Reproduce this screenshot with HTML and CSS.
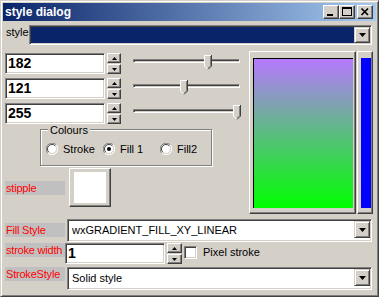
FILE: index.html
```html
<!DOCTYPE html>
<html lang="en">
<head>
    <meta charset="UTF-8">
    <title>style dialog</title>
    <link rel="stylesheet" href="styles.css">
</head>
<body>
    <div class="window">
        <div class="titlebar">
            <span class="title">style dialog</span>
            <div class="caption-buttons">
                <span class="cap-btn"><svg width="14" height="12" viewBox="0 0 14 12"><rect x="3" y="8" width="6" height="2" fill="#000"/></svg></span>
                <span class="cap-btn"><svg width="14" height="12" viewBox="0 0 14 12"><rect x="2.5" y="1.5" width="9" height="8" fill="none" stroke="#000"/><rect x="2" y="1" width="10" height="2" fill="#000"/></svg></span>
                <span class="cap-btn close"><svg width="14" height="12" viewBox="0 0 14 12"><path d="M3.5 2.5L10 9M10 2.5L3.5 9" stroke="#000" stroke-width="1.7"/></svg></span>
            </div>
        </div>

        <div class="panel">
            <div class="style-row">
                <span class="style-label">style</span>
                <div class="combo combo-top">
                    <span class="combo-text selected"></span>
                    <span class="drop-btn"><svg width="7" height="4" viewBox="0 0 7 4"><path d="M0 0H7L3.5 4Z" fill="#000"/></svg></span>
                </div>
            </div>

            <div class="middle">
                <div class="left-col">
                    <div class="color-row">
                        <div class="num-box">182</div>
                        <div class="spin">
                            <span class="spin-btn"><svg width="5" height="3" viewBox="0 0 5 3"><path d="M0 3H5L2.5 0Z" fill="#000"/></svg></span>
                            <span class="spin-btn"><svg width="5" height="3" viewBox="0 0 5 3"><path d="M0 0H5L2.5 3Z" fill="#000"/></svg></span>
                        </div>
                        <div class="slider">
                            <div class="slider-track"></div>
                            <svg class="thumb" style="left: 71px" width="8" height="15" viewBox="0 0 8 15"><path d="M0 0H8V11L4 15L0 11Z" fill="#d4d0c8"/><path d="M0.5 11V0.5H7" stroke="#fff" fill="none"/><path d="M0.5 11L4 14.5" stroke="#fff" fill="none"/><path d="M7.5 0V11L4 14.5" stroke="#404040" fill="none"/><path d="M6.5 1V10.6L4 13.2" stroke="#808080" fill="none"/></svg>
                        </div>
                    </div>
                    <div class="color-row">
                        <div class="num-box">121</div>
                        <div class="spin">
                            <span class="spin-btn"><svg width="5" height="3" viewBox="0 0 5 3"><path d="M0 3H5L2.5 0Z" fill="#000"/></svg></span>
                            <span class="spin-btn"><svg width="5" height="3" viewBox="0 0 5 3"><path d="M0 0H5L2.5 3Z" fill="#000"/></svg></span>
                        </div>
                        <div class="slider">
                            <div class="slider-track"></div>
                            <svg class="thumb" style="left: 47px" width="8" height="15" viewBox="0 0 8 15"><path d="M0 0H8V11L4 15L0 11Z" fill="#d4d0c8"/><path d="M0.5 11V0.5H7" stroke="#fff" fill="none"/><path d="M0.5 11L4 14.5" stroke="#fff" fill="none"/><path d="M7.5 0V11L4 14.5" stroke="#404040" fill="none"/><path d="M6.5 1V10.6L4 13.2" stroke="#808080" fill="none"/></svg>
                        </div>
                    </div>
                    <div class="color-row">
                        <div class="num-box">255</div>
                        <div class="spin">
                            <span class="spin-btn"><svg width="5" height="3" viewBox="0 0 5 3"><path d="M0 3H5L2.5 0Z" fill="#000"/></svg></span>
                            <span class="spin-btn"><svg width="5" height="3" viewBox="0 0 5 3"><path d="M0 0H5L2.5 3Z" fill="#000"/></svg></span>
                        </div>
                        <div class="slider">
                            <div class="slider-track"></div>
                            <svg class="thumb" style="left: 100px" width="8" height="15" viewBox="0 0 8 15"><path d="M0 0H8V11L4 15L0 11Z" fill="#d4d0c8"/><path d="M0.5 11V0.5H7" stroke="#fff" fill="none"/><path d="M0.5 11L4 14.5" stroke="#fff" fill="none"/><path d="M7.5 0V11L4 14.5" stroke="#404040" fill="none"/><path d="M6.5 1V10.6L4 13.2" stroke="#808080" fill="none"/></svg>
                        </div>
                    </div>

                    <div class="group">
                        <span class="group-title">Colours</span>
                        <div class="options">
                            <label class="option">
                                <svg width="12" height="12" viewBox="0 0 12 12"><circle cx="6" cy="6" r="5" fill="#fff"/><path d="M1.76 10.24A6 6 0 0 1 10.24 1.76" stroke="#808080" fill="none"/><path d="M10.24 1.76A6 6 0 0 1 1.76 10.24" stroke="#fff" fill="none"/><path d="M2.8 9.2A4.5 4.5 0 0 1 9.2 2.8" stroke="#404040" fill="none"/><path d="M9.2 2.8A4.5 4.5 0 0 1 2.8 9.2" stroke="#d4d0c8" fill="none"/></svg>
                                <span>Stroke</span>
                            </label>
                            <label class="option">
                                <svg width="12" height="12" viewBox="0 0 12 12"><circle cx="6" cy="6" r="5" fill="#fff"/><path d="M1.76 10.24A6 6 0 0 1 10.24 1.76" stroke="#808080" fill="none"/><path d="M10.24 1.76A6 6 0 0 1 1.76 10.24" stroke="#fff" fill="none"/><path d="M2.8 9.2A4.5 4.5 0 0 1 9.2 2.8" stroke="#404040" fill="none"/><path d="M9.2 2.8A4.5 4.5 0 0 1 2.8 9.2" stroke="#d4d0c8" fill="none"/><circle cx="6" cy="6" r="2" fill="#000"/></svg>
                                <span>Fill 1</span>
                            </label>
                            <label class="option">
                                <svg width="12" height="12" viewBox="0 0 12 12"><circle cx="6" cy="6" r="5" fill="#fff"/><path d="M1.76 10.24A6 6 0 0 1 10.24 1.76" stroke="#808080" fill="none"/><path d="M10.24 1.76A6 6 0 0 1 1.76 10.24" stroke="#fff" fill="none"/><path d="M2.8 9.2A4.5 4.5 0 0 1 9.2 2.8" stroke="#404040" fill="none"/><path d="M9.2 2.8A4.5 4.5 0 0 1 2.8 9.2" stroke="#d4d0c8" fill="none"/></svg>
                                <span>Fill2</span>
                            </label>
                        </div>
                    </div>

                    <div class="stipple-row">
                        <span class="tag">stipple</span>
                        <div class="stipple-btn"><div class="stipple-swatch"></div></div>
                    </div>
                </div>

                <div class="preview"><div class="gradient"></div></div>
                <div class="bar"><div class="bar-fill"></div></div>
            </div>

            <div class="form-row fill-row">
                <span class="tag">Fill Style</span>
                <div class="combo combo-lg">
                    <span class="combo-text">wxGRADIENT_FILL_XY_LINEAR</span>
                    <span class="drop-btn"><svg width="7" height="4" viewBox="0 0 7 4"><path d="M0 0H7L3.5 4Z" fill="#000"/></svg></span>
                </div>
            </div>

            <div class="form-row width-row">
                <span class="tag">stroke width</span>
                <div class="num-box width-box">1</div>
                <div class="spin spin-wide">
                    <span class="spin-btn"><svg width="5" height="3" viewBox="0 0 5 3"><path d="M0 3H5L2.5 0Z" fill="#000"/></svg></span>
                    <span class="spin-btn"><svg width="5" height="3" viewBox="0 0 5 3"><path d="M0 0H5L2.5 3Z" fill="#000"/></svg></span>
                </div>
                <span class="checkbox"></span>
                <span class="check-label">Pixel stroke</span>
            </div>

            <div class="form-row stroke-row">
                <span class="tag">StrokeStyle</span>
                <div class="combo combo-lg">
                    <span class="combo-text">Solid style</span>
                    <span class="drop-btn"><svg width="7" height="4" viewBox="0 0 7 4"><path d="M0 0H7L3.5 4Z" fill="#000"/></svg></span>
                </div>
            </div>
        </div>
    </div>
</body>
</html>
```

FILE: styles.css
```css
body {
    margin: 0;
    background-color: #d4d0c8;
    font-family: "Liberation Sans", Arial, sans-serif;
    font-size: 11px;
    color: #000;
}
.window {
    width: 379px;
    height: 297px;
    box-sizing: border-box;
    border: 1px solid;
    border-color: #d4d0c8 #404040 #404040 #d4d0c8;
    box-shadow: inset 1px 1px 0 #fff, inset -1px -1px 0 #808080;
    padding: 2px;
    background-color: #d4d0c8;
}
.titlebar {
    height: 18px;
    display: flex;
    align-items: center;
    justify-content: space-between;
    padding: 0 3px 0 2px;
    background: linear-gradient(to right, #0a246a, #a6caf0);
}
.title {
    color: #fff;
    font-weight: bold;
    font-size: 12px;
}
.caption-buttons {
    display: flex;
}
.cap-btn {
    width: 16px;
    height: 14px;
    box-sizing: border-box;
    display: flex;
    background-color: #d4d0c8;
    border: 1px solid;
    border-color: #fff #404040 #404040 #fff;
    box-shadow: inset -1px -1px 0 #808080;
}
.cap-btn.close {
    margin-left: 2px;
}
.panel {
    padding: 0 3px 0 2px;
}
.style-row {
    display: flex;
    margin-top: 4px;
}
.style-label {
    width: 23px;
    padding-left: 1px;
    line-height: 15px;
}
.combo {
    display: flex;
    box-sizing: border-box;
    border: 1px solid;
    border-color: #808080 #fff #fff #808080;
    box-shadow: inset 1px 1px 0 #404040, inset -1px -1px 0 #d4d0c8;
    padding: 1px;
    background-color: #fff;
}
.combo-top {
    width: 343px;
    height: 20px;
}
.combo-lg {
    width: 305px;
    height: 23px;
    margin-left: 2px;
}
.combo-text {
    flex: 1;
    padding-left: 3px;
    line-height: 19px;
    white-space: nowrap;
}
.combo-text.selected {
    background-color: #0a246a;
}
.drop-btn {
    width: 16px;
    height: 16px;
    box-sizing: border-box;
    display: flex;
    align-items: center;
    justify-content: center;
    background-color: #d4d0c8;
    border: 1px solid;
    border-color: #d4d0c8 #404040 #404040 #d4d0c8;
    box-shadow: inset 1px 1px 0 #fff, inset -1px -1px 0 #808080;
}
.combo-lg .drop-btn {
    height: 17px;
}
.middle {
    display: flex;
    margin-top: 6px;
    height: 163px;
}
.left-col {
    width: 244px;
    padding-top: 2px;
}
.color-row {
    display: flex;
    height: 21px;
    margin-bottom: 4px;
}
.num-box {
    width: 100px;
    height: 21px;
    box-sizing: border-box;
    border: 1px solid;
    border-color: #808080 #fff #fff #808080;
    box-shadow: inset 1px 1px 0 #404040, inset -1px -1px 0 #d4d0c8;
    background-color: #fff;
    padding-left: 2px;
    font-size: 14px;
    font-weight: bold;
    line-height: 19px;
}
.spin {
    width: 14px;
    margin-left: 2px;
    display: flex;
    flex-direction: column;
    gap: 1px;
}
.spin-btn {
    height: 10px;
    box-sizing: border-box;
    display: flex;
    align-items: center;
    justify-content: center;
    background-color: #d4d0c8;
    border: 1px solid;
    border-color: #fff #404040 #404040 #fff;
    box-shadow: inset -1px -1px 0 #808080;
}
.slider {
    position: relative;
    width: 107px;
    margin-left: 12px;
}
.slider-track {
    margin-top: 6px;
    height: 4px;
    box-sizing: border-box;
    border: 1px solid;
    border-color: #808080 #fff #fff #808080;
    box-shadow: inset 1px 1px 0 #404040;
    background-color: #d4d0c8;
}
.thumb {
    position: absolute;
    top: 2px;
}
.group {
    position: relative;
    width: 172px;
    height: 37px;
    box-sizing: border-box;
    margin: 5px 0 0 35px;
    border: 1px solid #808080;
    box-shadow: inset 1px 1px 0 #fff, 1px 1px 0 #fff;
}
.group-title {
    position: absolute;
    top: -6px;
    left: 7px;
    padding: 0 2px;
    line-height: 13px;
    background-color: #d4d0c8;
}
.options {
    display: grid;
    grid-template-columns: 57px 57px 57px;
    margin: 13px 0 0 5px;
}
.option {
    display: flex;
    align-items: center;
    gap: 5px;
    line-height: 12px;
}
.stipple-row {
    display: flex;
    align-items: center;
    margin-top: 2px;
}
.tag {
    width: 60px;
    height: 14px;
    box-sizing: border-box;
    padding-left: 1px;
    background-color: #c0c0c0;
    color: #ff0000;
    line-height: 14px;
    font-size: 11px;
    letter-spacing: -0.2px;
    white-space: nowrap;
    flex: none;
}
.stipple-row .tag {
    margin-right: 4px;
}
.stipple-btn {
    width: 42px;
    height: 39px;
    box-sizing: border-box;
    padding: 3px 4px;
    border: 1px solid;
    border-color: #fff #404040 #404040 #fff;
    box-shadow: inset -1px -1px 0 #808080;
}
.stipple-swatch {
    height: 100%;
    background-color: #fff;
}
.preview, .bar {
    height: 163px;
    box-sizing: border-box;
    border: 1px solid;
    border-color: #fff #404040 #404040 #fff;
    box-shadow: inset -1px -1px 0 #808080;
}
.preview {
    width: 107px;
    padding: 6px 2px 5px 3px;
}
.gradient {
    height: 100%;
    box-sizing: border-box;
    border-top: 1px solid #000;
    border-left: 1px solid #000;
    background: linear-gradient(rgb(182, 121, 255), rgb(0, 255, 0));
}
.bar {
    width: 16px;
    margin-left: 1px;
    padding: 6px 1px 5px 3px;
}
.bar-fill {
    height: 100%;
    background-color: #0000ff;
}
.form-row {
    display: flex;
    align-items: flex-start;
}
.fill-row {
    margin-top: 5px;
}
.fill-row .tag {
    margin-top: 4px;
}
.width-row {
    margin-top: 1px;
}
.width-box {
    width: 100px;
}
.spin-wide {
    width: 15px;
}
.checkbox {
    width: 13px;
    height: 13px;
    box-sizing: border-box;
    margin: 3px 0 0 2px;
    border: 1px solid;
    border-color: #808080 #fff #fff #808080;
    box-shadow: inset 1px 1px 0 #404040, inset -1px -1px 0 #d4d0c8;
    background-color: #fff;
}
.check-label {
    margin: 3px 0 0 6px;
    line-height: 13px;
}
.stroke-row {
    margin-top: 3px;
}
```
